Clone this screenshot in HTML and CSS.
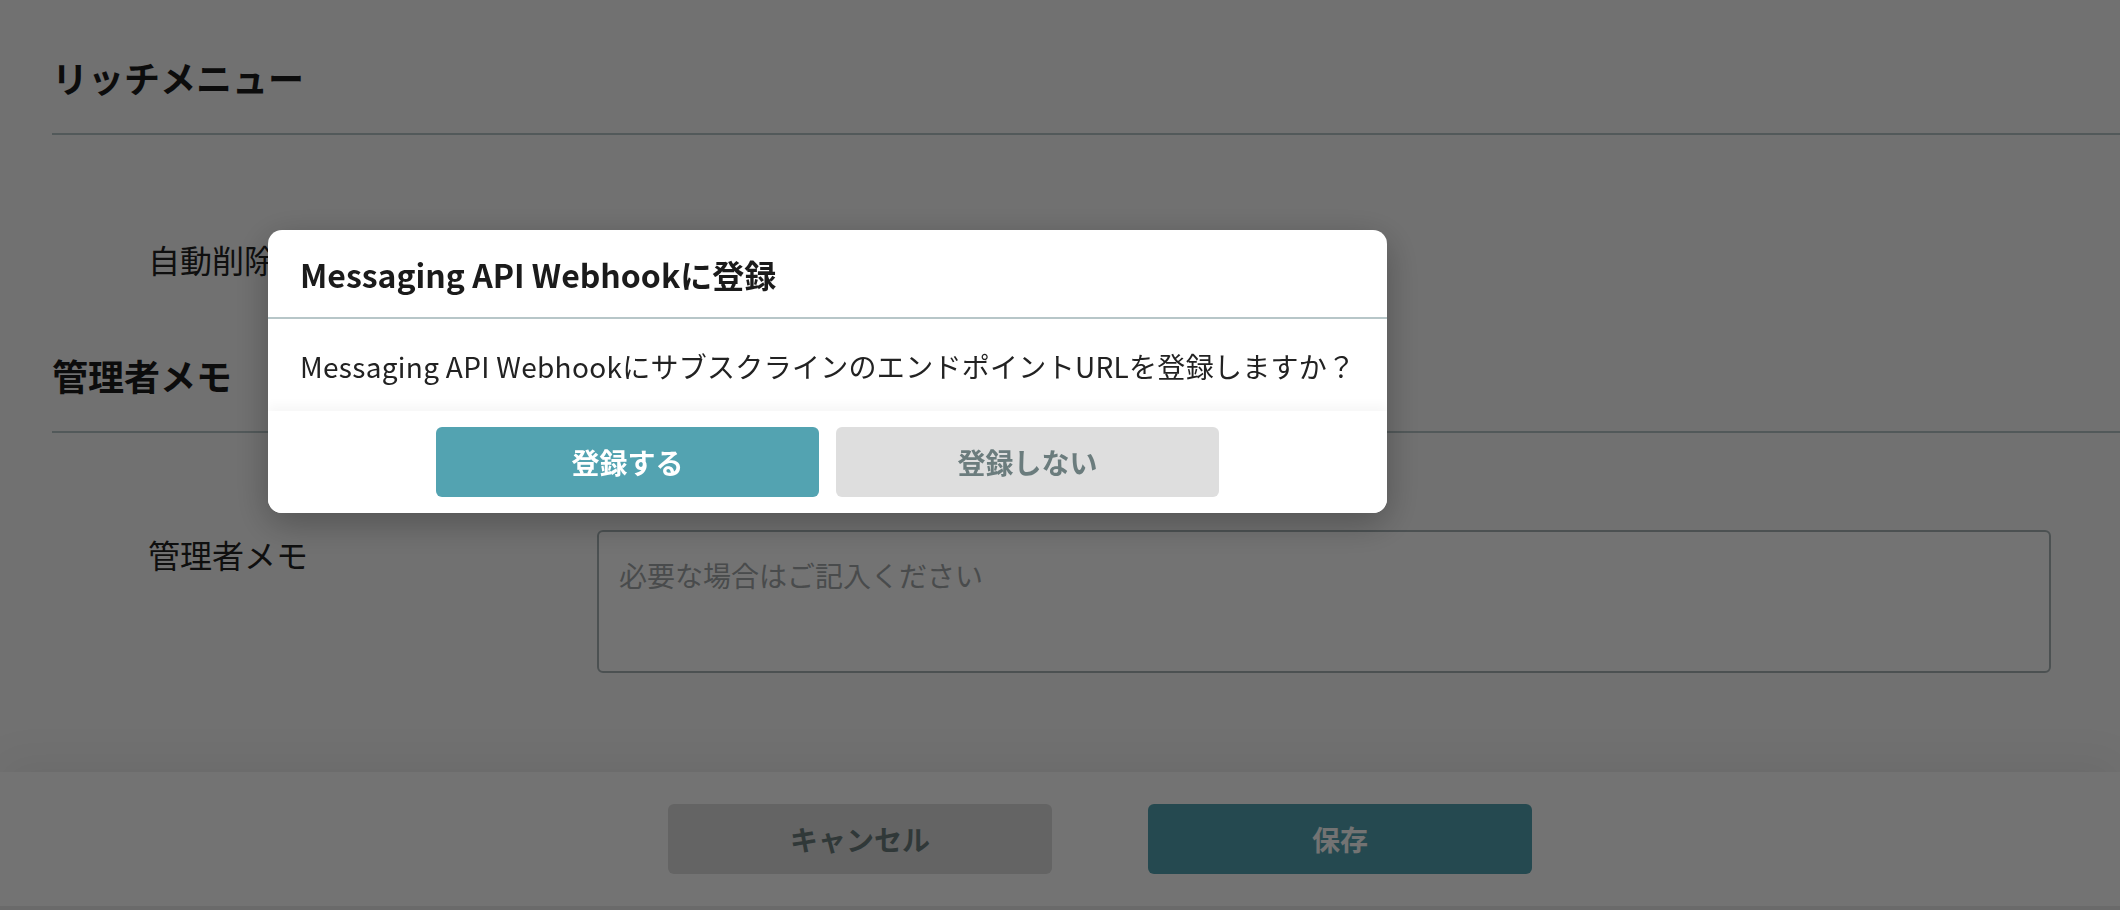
FILE: index.html
```html
<!DOCTYPE html>
<html lang="ja">
<head>
<meta charset="utf-8">
<title>リッチメニュー設定</title>
<link rel="stylesheet" href="styles.css">
</head>
<body>
<div class="page">
  <main class="content">
    <section class="section">
      <header class="section-head"><h2 class="section-title">リッチメニュー</h2></header>
      <div class="section-body first">
        <div class="form-row">
          <div class="form-label">自動削除</div>
          <div class="form-field"></div>
        </div>
      </div>
    </section>
    <section class="section">
      <header class="section-head"><h2 class="section-title">管理者メモ</h2></header>
      <div class="section-body second">
        <div class="form-row">
          <div class="form-label">管理者メモ</div>
          <div class="form-field">
            <textarea class="memo" placeholder="必要な場合はご記入ください"></textarea>
          </div>
        </div>
      </div>
    </section>
  </main>
  <footer class="page-footer">
    <button class="btn btn-secondary">キャンセル</button>
    <button class="btn btn-primary">保存</button>
  </footer>
  <div class="page-end"></div>
</div>

<div class="overlay"></div>

<div class="dialog" role="dialog">
  <div class="dialog-head">
    <h3 class="dialog-title">Messaging API Webhookに登録</h3>
  </div>
  <div class="dialog-body">
    <p class="dialog-text">Messaging API Webhookにサブスクラインのエンドポイント<span class="latin">URL</span>を登録しますか？</p>
  </div>
  <div class="dialog-foot">
    <button class="btn btn-primary dlg-btn">登録する</button>
    <button class="btn btn-secondary dlg-btn">登録しない</button>
  </div>
</div>
</body>
</html>
```

FILE: styles.css
```css
* { box-sizing: border-box; }

html, body {
  margin: 0;
  padding: 0;
}

body {
  font-family: "Noto Sans CJK JP", "Noto Sans", sans-serif;
  color: #1e1e1e;
  background: #ececec;
  overflow: hidden;
}

.page {
  display: flex;
  flex-direction: column;
  width: 2120px;
  height: 910px;
  background: #fafafa;
}

.content {
  padding-left: 52px;
  height: 772px;
}

.section-head {
  padding-top: 50px;
  padding-bottom: 29px;
  border-bottom: 2px solid #b7c6c8;
}

.section-title {
  margin: 0;
  font-size: 36px;
  line-height: 54px;
  font-weight: 700;
  color: #1b1b1b;
}

.section-body.first {
  padding-top: 100px;
  padding-bottom: 15px;
}

.section-body.second {
  padding-top: 97px;
}

.form-row {
  display: flex;
  align-items: flex-start;
  padding-left: 96px;
  padding-right: 69px;
}

.form-label {
  width: 449px;
  flex: none;
  font-size: 32px;
  line-height: 48px;
  font-weight: 400;
  color: #222;
}

.form-field {
  flex: 1;
  min-height: 48px;
}

.memo {
  display: block;
  width: 100%;
  height: 143px;
  border: 2px solid #a8b4b7;
  border-radius: 6px;
  background: #fff;
  padding: 22px 20px;
  font-family: "Noto Sans CJK JP", "Noto Sans", sans-serif;
  font-size: 28px;
  line-height: 42px;
  resize: none;
  outline: none;
}

.memo::placeholder {
  color: #a2a7a8;
}

.page-footer {
  height: 134px;
  flex: none;
  display: flex;
  justify-content: center;
  align-items: center;
  gap: 96px;
  padding-left: 80px;
  background: #fff;
  box-shadow: 0 -12px 40px rgba(0, 0, 0, 0.06);
}

.page-end {
  flex: 1;
  background: #ececec;
}

.btn {
  width: 384px;
  height: 70px;
  border: none;
  border-radius: 6px;
  font-family: "Noto Sans CJK JP", "Noto Sans", sans-serif;
  font-size: 28px;
  font-weight: 700;
  line-height: 1;
  padding: 0;
  cursor: pointer;
}

.btn-primary {
  background: #53a3b1;
  color: #fff;
}

.btn-secondary {
  background: #dedede;
  color: #6b7c7d;
}

.overlay {
  position: fixed;
  inset: 0;
  background: rgba(0, 0, 0, 0.55);
}

.dialog {
  position: fixed;
  left: 268px;
  top: 230px;
  width: 1119px;
  background: #fff;
  border-radius: 14px;
  overflow: hidden;
  box-shadow: 0 10px 36px rgba(0, 0, 0, 0.28);
}

.dialog-head {
  padding: 20px 32px 19px;
  border-bottom: 2px solid #b7c6c8;
}

.dialog-title {
  margin: 0;
  font-size: 32px;
  line-height: 48px;
  font-weight: 700;
  color: #1b1b1b;
}

.dialog-body {
  padding: 26px 32px 24px;
}

.dialog-text {
  margin: 0;
  font-size: 28px;
  line-height: 42px;
  color: #222;
  letter-spacing: 0.3px;
  white-space: nowrap;
}

.dialog-foot {
  position: relative;
  display: flex;
  justify-content: center;
  gap: 17px;
  padding: 16px 0;
  background: #fff;
  box-shadow: 0 -6px 10px rgba(0, 0, 0, 0.035);
}

.dlg-btn {
  width: 383px;
}
```
